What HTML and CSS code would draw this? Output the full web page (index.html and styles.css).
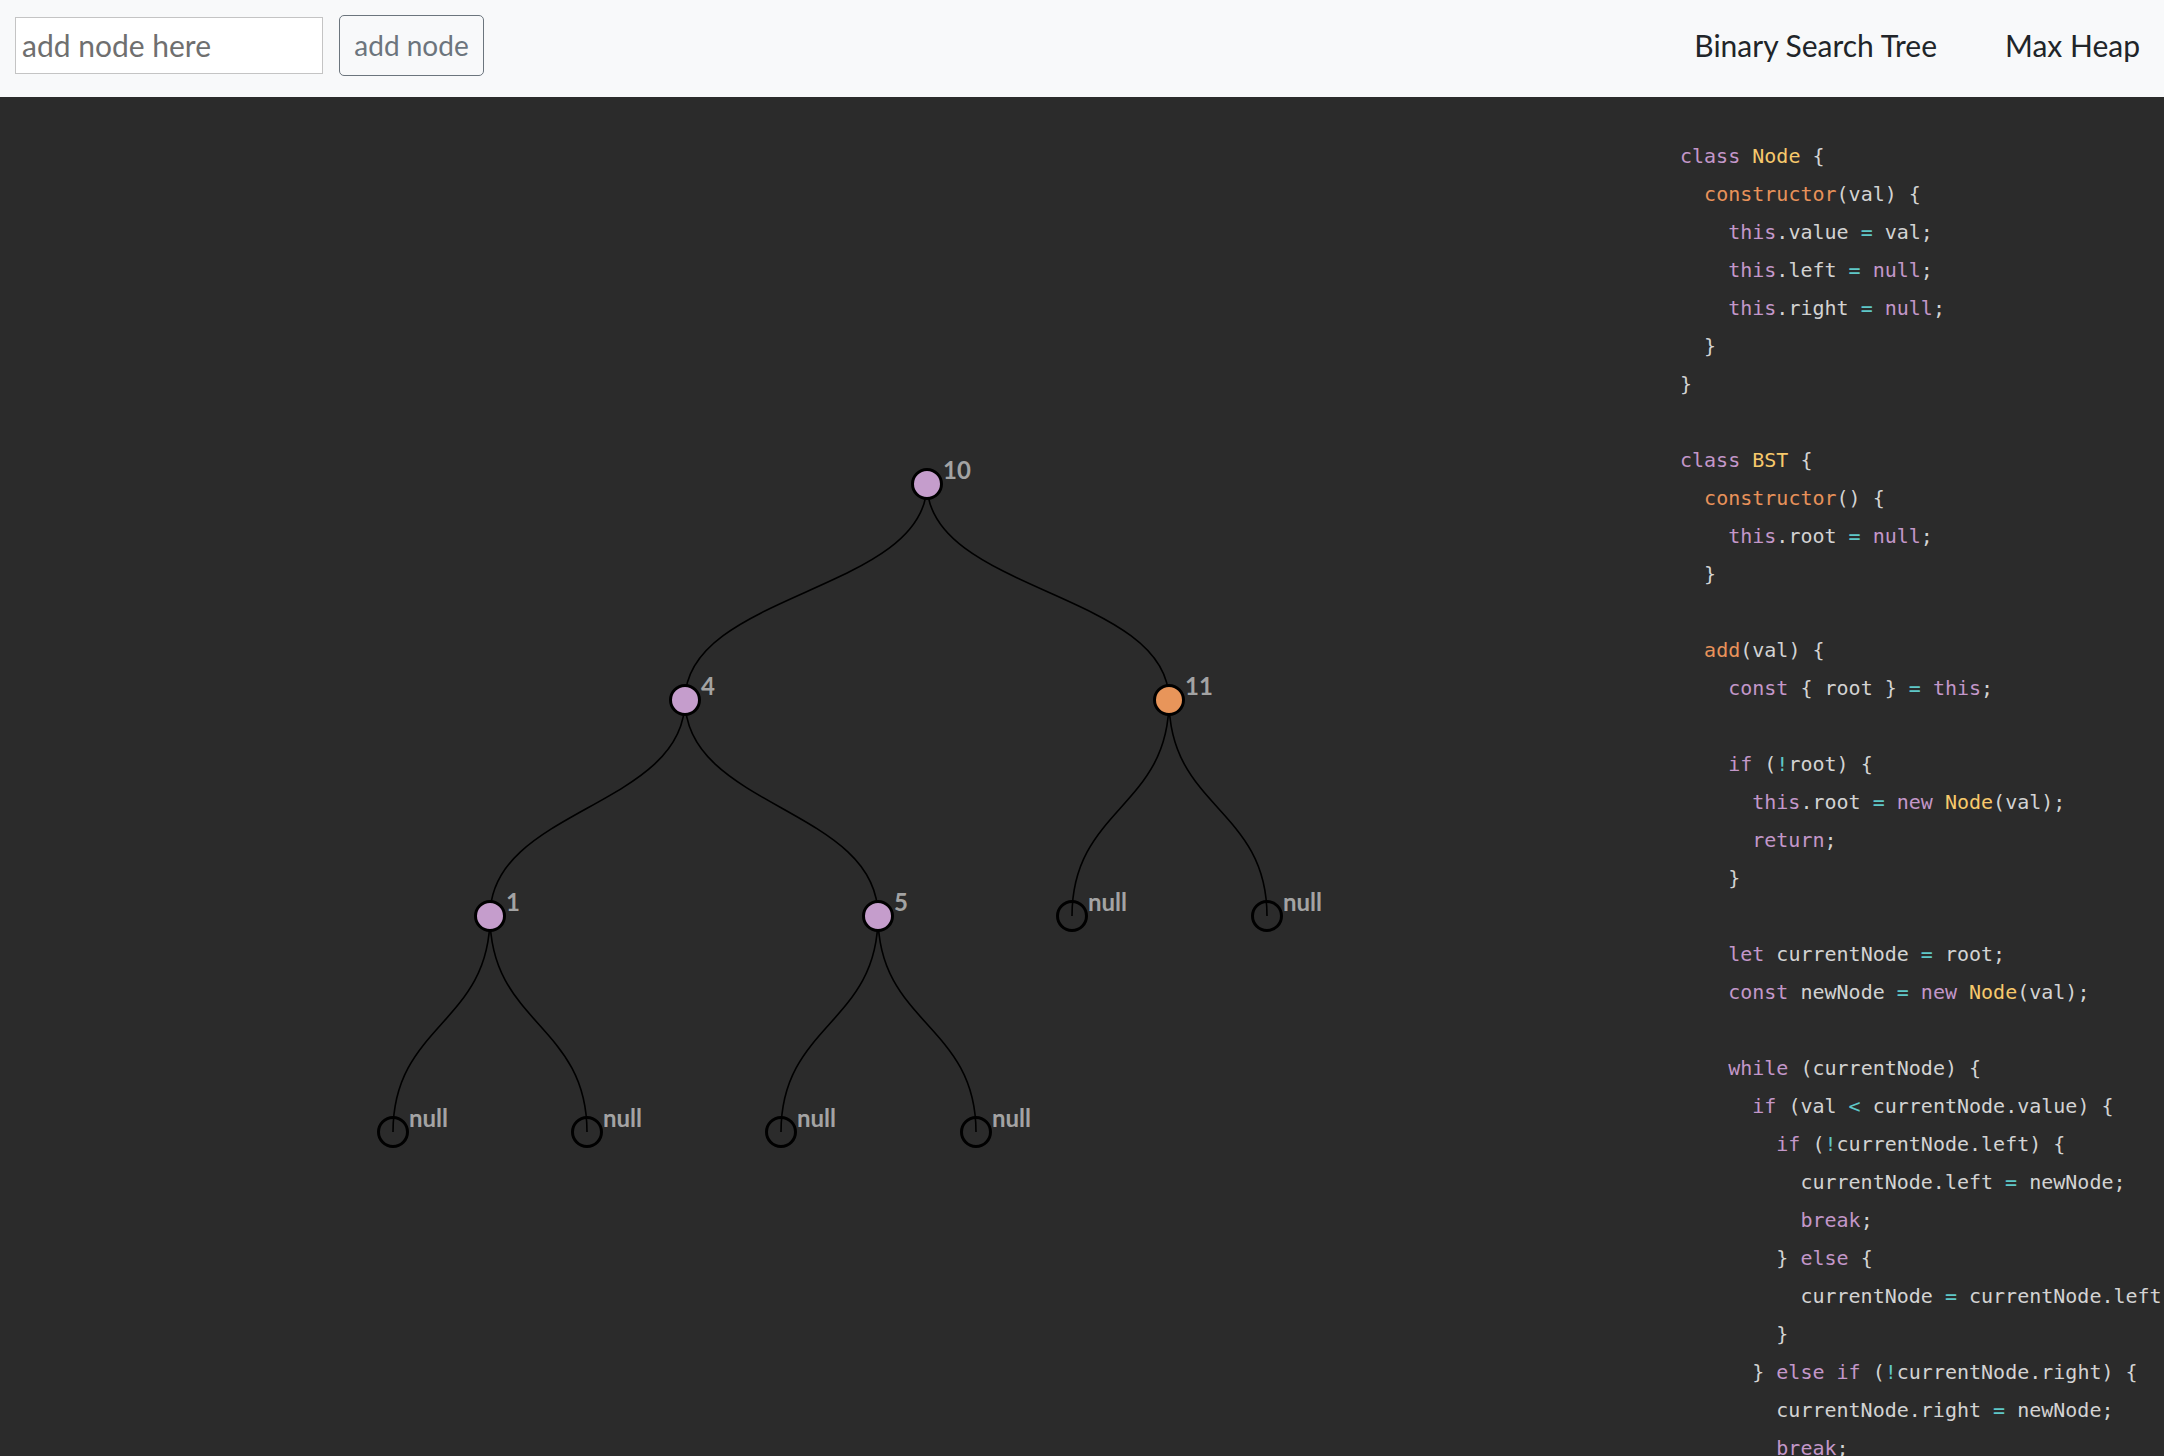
FILE: index.html
```html
<!DOCTYPE html>
<html lang="en">
<head>
<meta charset="utf-8">
<title>Binary Search Tree</title>
<link rel="stylesheet" href="styles.css">
</head>
<body>
<header class="topbar">
  <form class="add-form">
    <input class="node-input" type="text" placeholder="add node here">
    <button class="add-btn" type="button">add node</button>
  </form>
  <nav class="nav">
    <a class="nav-link" href="#">Binary Search Tree</a>
    <a class="nav-link" href="#">Max Heap</a>
  </nav>
</header>
<main class="main">
  <div class="canvas">
    <svg class="tree" width="1640" height="1359" viewBox="0 0 1640 1359">
      <g class="links">
        <path d="M927,387 C927,495 685,495 685,603"/>
        <path d="M927,387 C927,495 1169,495 1169,603"/>
        <path d="M685,603 C685,711 490,711 490,819"/>
        <path d="M685,603 C685,711 878,711 878,819"/>
        <path d="M1169,603 C1169,711 1072,711 1072,819"/>
        <path d="M1169,603 C1169,711 1267,711 1267,819"/>
        <path d="M490,819 C490,927 393,927 393,1035"/>
        <path d="M490,819 C490,927 587,927 587,1035"/>
        <path d="M878,819 C878,927 781,927 781,1035"/>
        <path d="M878,819 C878,927 976,927 976,1035"/>
      </g>
      <g class="nodes">
        <circle class="n-val" cx="927" cy="387" r="14.5"/>
        <circle class="n-val" cx="685" cy="603" r="14.5"/>
        <circle class="n-new" cx="1169" cy="603" r="14.5"/>
        <circle class="n-val" cx="490" cy="819" r="14.5"/>
        <circle class="n-val" cx="878" cy="819" r="14.5"/>
        <circle class="n-null" cx="1072" cy="819" r="14.5"/>
        <circle class="n-null" cx="1267" cy="819" r="14.5"/>
        <circle class="n-null" cx="393" cy="1035" r="14.5"/>
        <circle class="n-null" cx="587" cy="1035" r="14.5"/>
        <circle class="n-null" cx="781" cy="1035" r="14.5"/>
        <circle class="n-null" cx="976" cy="1035" r="14.5"/>
      </g>
      <g class="labels">
        <text x="943" y="382">10</text>
        <text x="701" y="598">4</text>
        <text x="1185" y="598">11</text>
        <text x="506" y="814">1</text>
        <text x="894" y="814">5</text>
        <text x="1088" y="814">null</text>
        <text x="1283" y="814">null</text>
        <text x="409" y="1030">null</text>
        <text x="603" y="1030">null</text>
        <text x="797" y="1030">null</text>
        <text x="992" y="1030">null</text>
      </g>
    </svg>
  </div>
  <pre class="code"><span class="k">class</span> <span class="c">Node</span> {
  <span class="f">constructor</span>(val) {
    <span class="k">this</span>.value <span class="o">=</span> val;
    <span class="k">this</span>.left <span class="o">=</span> <span class="k">null</span>;
    <span class="k">this</span>.right <span class="o">=</span> <span class="k">null</span>;
  }
}

<span class="k">class</span> <span class="c">BST</span> {
  <span class="f">constructor</span>() {
    <span class="k">this</span>.root <span class="o">=</span> <span class="k">null</span>;
  }

  <span class="f">add</span>(val) {
    <span class="k">const</span> { root } <span class="o">=</span> <span class="k">this</span>;

    <span class="k">if</span> (<span class="o">!</span>root) {
      <span class="k">this</span>.root <span class="o">=</span> <span class="k">new</span> <span class="c">Node</span>(val);
      <span class="k">return</span>;
    }

    <span class="k">let</span> currentNode <span class="o">=</span> root;
    <span class="k">const</span> newNode <span class="o">=</span> <span class="k">new</span> <span class="c">Node</span>(val);

    <span class="k">while</span> (currentNode) {
      <span class="k">if</span> (val <span class="o">&lt;</span> currentNode.value) {
        <span class="k">if</span> (<span class="o">!</span>currentNode.left) {
          currentNode.left <span class="o">=</span> newNode;
          <span class="k">break</span>;
        } <span class="k">else</span> {
          currentNode <span class="o">=</span> currentNode.left;
        }
      } <span class="k">else</span> <span class="k">if</span> (<span class="o">!</span>currentNode.right) {
        currentNode.right <span class="o">=</span> newNode;
        <span class="k">break</span>;
      } <span class="k">else</span> {
        currentNode <span class="o">=</span> currentNode.right;
      }
    }
  }
}</pre>
</main>
</body>
</html>
```
FILE: styles.css
```css
html, body {
  margin: 0;
  padding: 0;
}
body {
  width: 2164px;
  height: 1456px;
  overflow: hidden;
  background: #2b2b2b;
  font-family: "Lato", "Liberation Sans", sans-serif;
}
.topbar {
  height: 97px;
  box-sizing: border-box;
  background: #f8f9fa;
  display: flex;
  align-items: center;
  justify-content: space-between;
  padding: 0 24px 0 15px;
}
.add-form {
  display: flex;
  align-items: center;
  gap: 16px;
  margin-top: -7px;
}
.node-input {
  width: 308px;
  height: 57px;
  box-sizing: border-box;
  border: 1px solid #c4c4c4;
  border-radius: 0;
  background: #fff;
  padding: 0 6px;
  font-family: "Lato", "Liberation Sans", sans-serif;
  font-size: 30px;
  color: #495057;
  outline: none;
}
.node-input::placeholder {
  color: #6f6f6f;
}
.add-btn {
  width: 145px;
  height: 61px;
  box-sizing: border-box;
  border: 1.5px solid #6c757d;
  border-radius: 5px;
  background: transparent;
  color: #6c757d;
  font-family: "Lato", "Liberation Sans", sans-serif;
  font-size: 28px;
  padding: 0;
}
.nav {
  display: flex;
  gap: 68px;
  margin-top: -8px;
}
.nav-link {
  color: #212529;
  text-decoration: none;
  font-size: 30px;
}
.main {
  display: flex;
  height: 1359px;
  background: #2b2b2b;
  overflow: hidden;
}
.canvas {
  flex: 0 0 1640px;
}
.tree {
  display: block;
}
.links path {
  fill: none;
  stroke: #000;
  stroke-width: 1.6;
}
.nodes circle {
  stroke: #000;
  stroke-width: 3;
}
.n-val { fill: #c59dcc; }
.n-new { fill: #e8955a; }
.n-null { fill: none; }
.labels text {
  fill: #a3a3a3;
  font-family: "Lato", "Liberation Sans", sans-serif;
  font-weight: 700;
  font-size: 24px;
}
.code {
  flex: 1 1 auto;
  min-width: 0;
  margin: 0;
  padding: 40px 0 0 40px;
  overflow: hidden;
  white-space: pre;
  font-family: "DejaVu Sans Mono", "Liberation Mono", monospace;
  font-size: 20px;
  line-height: 38px;
  color: #d3d3d3;
}
.code .k { color: #c397c9; }
.code .f { color: #e8925a; }
.code .c { color: #f7c96b; }
.code .o { color: #5fc8c8; }
```
